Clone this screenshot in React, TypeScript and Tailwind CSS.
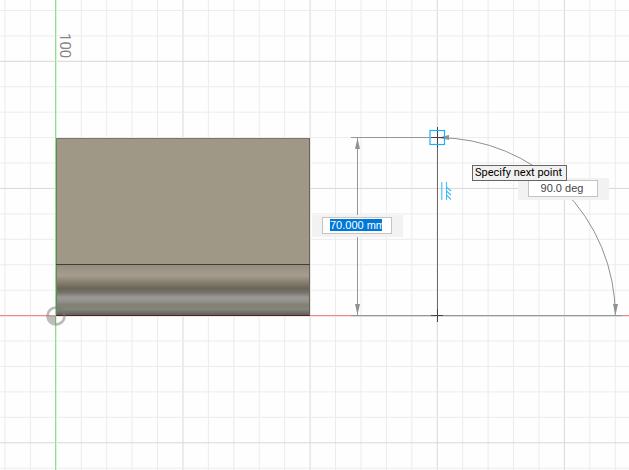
import { useEffect, useRef } from "react";
import clsx from "clsx";

const ORIGIN_X = 55.8;
const ORIGIN_Y = 315.6;
const STEP = 25.43;

// grid line indexes counted from the origin, enough for a large window
const COLUMNS = Array.from({ length: 103 }, (_, i) => i - 2);
const ROWS = Array.from({ length: 83 }, (_, i) => i - 12);

function Grid() {
  return (
    <g strokeWidth="1">
      {COLUMNS.map((n) => {
        const x = ORIGIN_X + n * STEP;
        return <line key={n} x1={x} x2={x} y1="0" y2="100%" stroke={n % 5 === 0 ? "#d8d8d8" : "#ececec"} />;
      })}
      {ROWS.map((n) => {
        const y = ORIGIN_Y + n * STEP;
        return <line key={n} x1="0" x2="100%" y1={y} y2={y} stroke={n % 5 === 0 ? "#d8d8d8" : "#ececec"} />;
      })}
    </g>
  );
}

function Axes() {
  return (
    <g shapeRendering="crispEdges">
      <rect x="0" y="315" width="100%" height="1" fill="#ea8a8a" />
      <rect x="0" y="316" width="100%" height="1" fill="#fbdede" />
      <rect x="55" y="0" width="1" height="100%" fill="#93dc93" />
      <rect x="56" y="0" width="1" height="100%" fill="#d9f5d9" />
    </g>
  );
}

function Body() {
  return (
    <g>
      <rect x="56" y="138" width="254" height="127" fill="#a09887" />
      <rect x="56" y="265" width="254" height="51" fill="url(#fillet)" />
      <g shapeRendering="crispEdges">
        <rect x="56" y="138" width="254" height="1" fill="#78746a" />
        <rect x="56" y="138" width="1" height="178" fill="#698261" />
        <rect x="309" y="138" width="1" height="178" fill="#67635a" />
        <rect x="56" y="264" width="254" height="1" fill="#413f3b" />
        <rect x="56" y="315" width="254" height="1" fill="#4a2525" />
      </g>
    </g>
  );
}

function OriginMark() {
  return (
    <g fill="none" stroke="#777777" strokeOpacity="0.5">
      <circle cx="56" cy="316" r="8.5" strokeWidth="2.6" />
      <path d="M56 316H48.8A7.2 7.2 0 0 0 56 323.2Z" fill="#777777" fillOpacity="0.5" stroke="none" />
    </g>
  );
}

function Dimensions() {
  return (
    <g fill="none" stroke="#969696">
      <path d="M351 137.5H430M357.5 138V315" />
      <path d="M351 316.5H622" stroke="#dcdcdc" />
      <path d="M351 315.5H622" />
      <path d="M437.5 137.6A178 178 0 0 1 615.3 315.6" stroke="#909090" />
      <g fill="#929292" stroke="none">
        <path d="M357.5 138L360 149H355Z" />
        <path d="M357.5 315L360 304H355Z" />
        <path d="M615.5 315L618 304H613Z" />
        <path d="M439 137.5L449 135V140Z" />
      </g>
    </g>
  );
}

function SketchLine() {
  return (
    <g fill="none">
      <path d="M437.5 127V322" stroke="#6b6b6b" />
      <path d="M431 315.5H443M437.5 309V322M437.5 127V148M431 137.5H444" stroke="#444444" />
      <rect x="430" y="130.5" width="14.5" height="14" stroke="#1eaef5" strokeWidth="1.2" />
      <path
        d="M441.8 182V200M446.5 182V200M446.5 187L451 191M446.5 191L451 195M446.5 195L451 199.5"
        stroke="#45bdf7"
        strokeWidth="1.1"
      />
    </g>
  );
}

type FieldProps = {
  label: string;
  value: string;
  selected?: boolean;
};

function ValueField({ label, value, selected = false }: FieldProps) {
  const ref = useRef<HTMLInputElement>(null);

  useEffect(() => {
    if (selected && ref.current) {
      ref.current.focus();
      ref.current.setSelectionRange(0, value.length, "backward");
      ref.current.scrollLeft = 0;
    }
  }, [selected, value]);

  return (
    <div className="flex bg-[#f2f2f2] pt-0.5 pr-[11px] pb-[3px] pl-2.5">
      <input
        ref={ref}
        type="text"
        aria-label={label}
        defaultValue={value}
        className={clsx(
          "h-[17px] w-[70px] border border-[#c4c4c4] bg-white pr-[9px] pb-px pl-[7px] font-['Liberation_Sans',sans-serif] text-[11px] leading-[14px] text-[#444444] outline-none selection:bg-[#0078d7] selection:text-white",
          selected ? "text-left" : "text-center",
        )}
      />
    </div>
  );
}

export default function App() {
  return (
    <main className="relative h-screen overflow-hidden bg-[#fefefe]">
      <svg className="block h-full w-full" role="img" aria-label="Sketch canvas">
        <defs>
          <linearGradient id="fillet" x1="0" y1="0" x2="0" y2="1">
            <stop offset="0" stopColor="#958d7d" />
            <stop offset="0.2" stopColor="#a69d8e" />
            <stop offset="0.32" stopColor="#8b8474" />
            <stop offset="0.46" stopColor="#696558" />
            <stop offset="0.54" stopColor="#777369" />
            <stop offset="0.63" stopColor="#9b9995" />
            <stop offset="0.7" stopColor="#949390" />
            <stop offset="0.78" stopColor="#808074" />
            <stop offset="0.87" stopColor="#85857a" />
            <stop offset="1" stopColor="#595957" />
          </linearGradient>
        </defs>
        <Grid />
        <Axes />
        <Body />
        <OriginMark />
        <text
          transform="translate(60 33) rotate(90)"
          className="fill-[#858585] font-['Roboto',sans-serif] text-[15px]"
        >
          100
        </text>
        <Dimensions />
        <SketchLine />
      </svg>

      <div className="absolute top-[215px] left-[312px]">
        <ValueField label="Length" value="70.000 mm" selected />
      </div>
      <div className="absolute top-[178px] left-[518px]">
        <ValueField label="Angle" value="90.0 deg" />
      </div>
      <div
        role="tooltip"
        className="absolute top-[165px] left-[472px] border border-[#666666] bg-[#f1f1f1] pr-1 pl-0.5 font-['Roboto',sans-serif] text-[11px] leading-[14px] whitespace-nowrap text-black"
      >
        Specify next point
      </div>
    </main>
  );
}
